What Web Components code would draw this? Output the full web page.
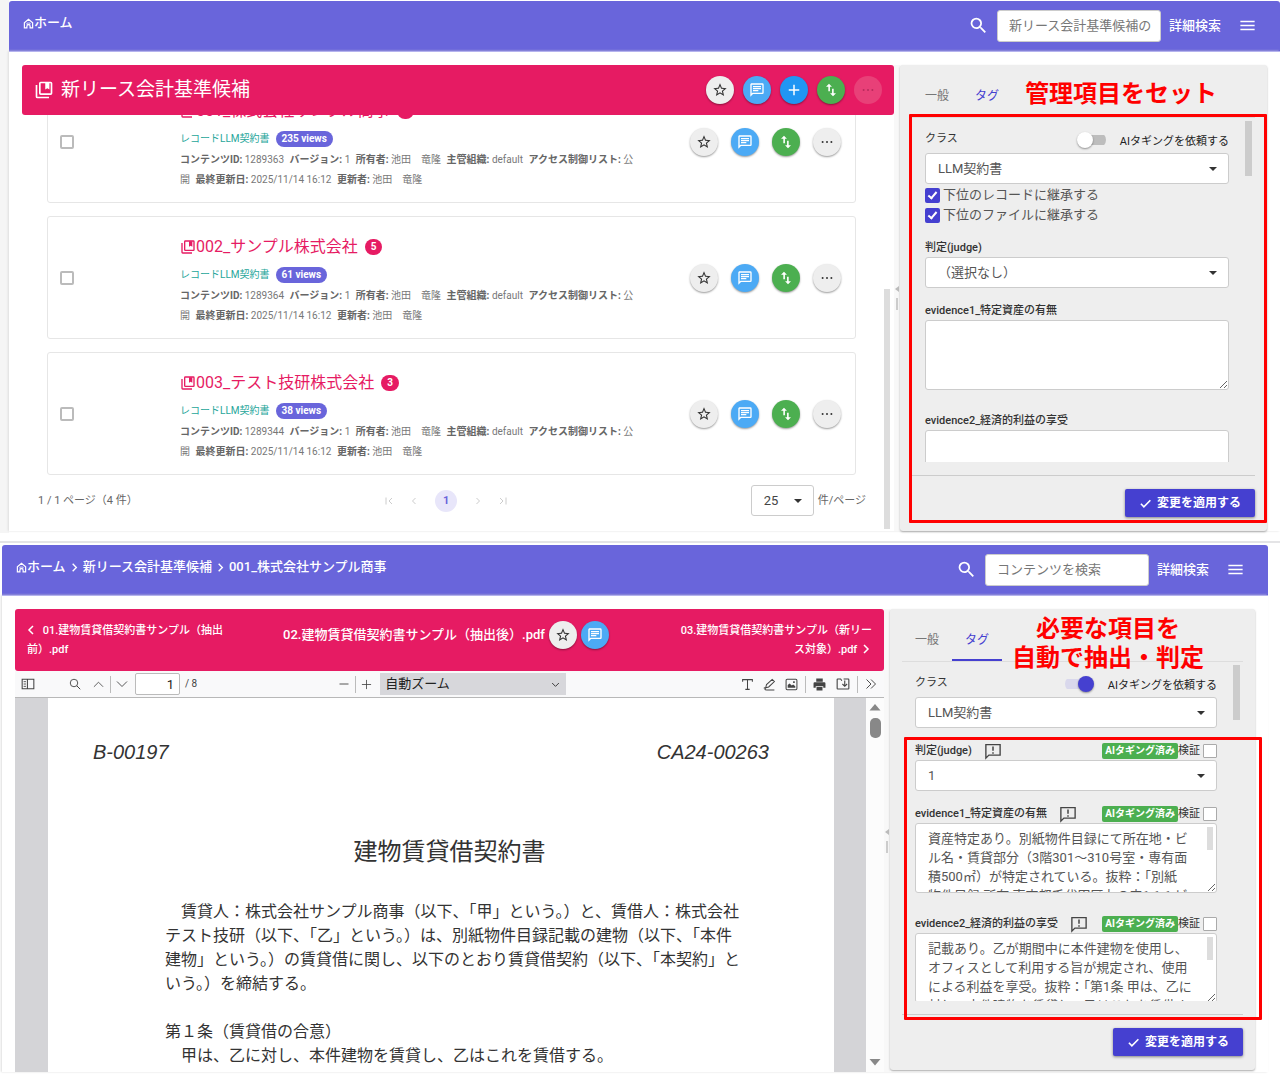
<!DOCTYPE html>
<html lang="ja">
<head>
<meta charset="utf-8">
<title>新リース会計基準候補</title>
<style>
body { margin: 0; background: #fff; color: #555; font: 13px/20px Roboto, "Noto Sans CJK JP", sans-serif; overflow-x: hidden; }
.stage { --side: 367px; background: linear-gradient(#f5f5f5, #f5f5f5) 0 0 / 9px 533px no-repeat #fff; padding: 1px 0 10px 9px; }
.stage + .stage { --side: 365px; background: #fff; border-top: 2px solid #e4e4e6; padding: 2px 12px 13px 2px; }
</style>
</head>
<body>
<div class="stage">
  <app-window placeholder="新リース会計基準候補の">
    <crumb-trail slot="crumbs" path="ホーム"></crumb-trail>
    <record-list></record-list>
    <tag-panel slot="side" style="height:466px">
      <class-row></class-row>
      <inherit-options></inherit-options>
      <tag-field label="判定(judge)" kind="select" value="（選択なし）"></tag-field>
      <tag-field label="evidence1_特定資産の有無" kind="area"></tag-field>
      <tag-field label="evidence2_経済的利益の享受" kind="area"></tag-field>
      <callout-note slot="notes" style="--box:49px 0 8px 9px; --top:13px; --left:125px; --lh:32px">管理項目をセット</callout-note>
    </tag-panel>
  </app-window>
</div>
<div class="stage">
  <app-window placeholder="コンテンツを検索">
    <crumb-trail slot="crumbs" path="ホーム|新リース会計基準候補|001_株式会社サンプル商事"></crumb-trail>
    <pdf-viewer></pdf-viewer>
    <tag-panel slot="side" style="height:461px">
      <class-row on></class-row>
      <tag-field ai label="判定(judge)" kind="select" value="1"></tag-field>
      <tag-field ai label="evidence1_特定資産の有無" kind="area" value="資産特定あり。別紙物件目録にて所在地・ビ
ル名・賃貸部分（3階301～310号室・専有面
積500㎡）が特定されている。抜粋：「別紙
物件目録 所在 東京都千代田区丸の内1-1-1 ビ"></tag-field>
      <tag-field ai label="evidence2_経済的利益の享受" kind="area" value="記載あり。乙が期間中に本件建物を使用し、
オフィスとして利用する旨が規定され、使用
による利益を享受。抜粋：「第1条 甲は、乙に
対し、本件建物を賃貸し、乙はこれを賃借す"></tag-field>
      <callout-note slot="notes" style="--box:128px -7px 50px 14px; --top:6px; --left:122px; --lh:29px">必要な項目を<br>自動で抽出・判定</callout-note>
    </tag-panel>
  </app-window>
</div>

<script>
const fill = (d) => `<path fill="currentColor" d="${d}"/>`;
const line = (d, w = 1.5) => `<path fill="none" stroke="currentColor" stroke-width="${w}" d="${d}"/>`;
const ICONS = {
  home: line('M3 21.500V10.500L12 3l9 7.500V21.500H15.500v-3.500a3.500 3.500 0 0 0-7 0V21.500Z', 2.6) + line('M8.500 11h7v3h-7z', 1.5),
  search: fill('M15.5 14h-.79l-.28-.27A6.47 6.47 0 0 0 16 9.5 6.5 6.5 0 1 0 9.5 16c1.61 0 3.09-.59 4.23-1.57l.27.28v.79l5 4.99L20.49 19l-4.99-5zm-6 0C7.01 14 5 11.99 5 9.5S7.01 5 9.5 5 14 7.01 14 9.5 11.99 14 9.5 14z'),
  menu: fill('M3 18h18v-2H3v2zm0-5h18v-2H3v2zm0-7v2h18V6H3z'),
  books: fill('M4 6H2v14a2 2 0 0 0 2 2h14v-2H4V6z') + line('M8 3h12a1 1 0 0 1 1 1v12a1 1 0 0 1-1 1H8a1 1 0 0 1-1-1V4a1 1 0 0 1 1-1z', 2) + fill('M13.5 3.5h5v8L16 10l-2.500 1.500z'),
  star: fill('M12,15.39L8.24,17.66L9.23,13.38L5.91,10.5L10.29,10.13L12,6.09L13.71,10.13L18.09,10.5L14.77,13.38L15.76,17.66M22,9.24L14.81,8.63L12,2L9.19,8.63L2,9.24L7.45,13.97L5.82,21L12,17.27L18.18,21L16.54,13.97L22,9.24Z'),
  chat: fill('M20,2A2,2 0 0,1 22,4V16A2,2 0 0,1 20,18H6L2,22V4C2,2.89 2.9,2 4,2H20M4,4V17.17L5.17,16H20V4H4M6,6H18V8H6V6M6,9H18V11H6V9M6,12H14V14H6V12Z'),
  plus: fill('M19,13H13V19H11V13H5V11H11V5H13V11H19V13Z'),
  swap: fill('M16 17V10h-2.400v7h-3L15 21.500l4.500-4.500H16zM9 2.500L4.500 7H8v7h2.400V7h3L9 2.500z'),
  dots: '<g fill="currentColor"><circle cx="4.5" cy="12" r="1.7"/><circle cx="12" cy="12" r="1.7"/><circle cx="19.5" cy="12" r="1.7"/></g>',
  left: line('M16 4l-8 8 8 8', 3), right: line('M8 4l8 8-8 8', 3),
  first: line('M18 6l-6 6 6 6M6 5v14', 2), last: line('M6 6l6 6-6 6M18 5v14', 2),
  prev: line('M15 6l-6 6 6 6', 2), next: line('M9 6l6 6-6 6', 2),
  caret: fill('M4 8h16l-8 8z'), check: line('M3.5 12.5l5.5 5.5L21 6', 3),
  alert: line('M2.5 3.5h19v14H6.500l-4 4z', 1.8) + line('M12 6v5.500M12 13.500v2', 2),
  sidebar: line('M2 4h20v16H2zM11 4v16', 1.8) + line('M4.5 8h4M4.5 12h4M4.5 16h4', 1.5),
  find: '<circle cx="10" cy="10" r="7.5" fill="none" stroke="currentColor" stroke-width="1.8"/>' + line('M15.5 15.5L22.5 22.5', 2),
  up: line('M2 17l10-10 10 10', 1.8), down: line('M2 7l10 10L22 7', 1.8), chev: line('M3 8l9 9 9-9', 2.5),
  minus: line('M3 12h18', 1.8), add: line('M12 2v20M2 12h20', 1.8),
  text: line('M3 7V3h18v4M12 3v18M8 21h8', 1.9),
  pen: line('M5 18l1.500-6L17 2.500l4 4L10.500 16.500zM1.500 19c2-2 4 0 2.500 1.500-1 1.500 1 1.500 3 1.500h14', 1.9),
  image: line('M4 2.500h16a2 2 0 0 1 2 2v15a2 2 0 0 1-2 2H4a2 2 0 0 1-2-2v-15a2 2 0 0 1 2-2z', 1.9) + fill('M5 18v-5l3.500-3 4 4 2.500-2 4 3v3zM15 6h3v3h-3z'),
  print: fill('M6 1h12v6H6zM3 8h18a2 2 0 0 1 2 2v8h-4v-3H5v3H1v-8a2 2 0 0 1 2-2zM6.500 16.500h11V23h-11z'),
  save: line('M13 3.500h8a1 1 0 0 1 1 1v15a1 1 0 0 1-1 1H3a1 1 0 0 1-1-1v-15a1 1 0 0 1 1-1h5l2 3M15 6v9M11 12l4 4 4-4', 1.9),
  more: line('M3 3l9 9-9 9M12 3l9 9-9 9', 1.9),
  tri: fill('M1 19h22L12 6z'), trid: fill('M1 6h22L12 19z')
};
const icon = (name, size) => `<svg width="${size}" height="${size}" viewBox="0 0 24 24" aria-hidden="true">${ICONS[name]}</svg>`;

const BASE = `
*,*::before,*::after{box-sizing:border-box}
:host{display:block} svg{display:block;flex:none}
button,input,select,textarea{font:inherit;color:inherit;margin:0}
button{padding:0;border:0;background:none} a{color:inherit;text-decoration:none}
input[type=checkbox]{appearance:none;flex:none;width:14px;height:14px;border:2px solid #bbb;border-radius:2px;background:#fff}
.drop{position:relative;display:block}
.drop select{appearance:none;display:block;width:100%;height:31px;padding:0 12px;border:1px solid #ccc;border-radius:3px;background:#fff}
.drop svg{position:absolute;right:10px;top:10px;color:#333;pointer-events:none}`;

class Part extends HTMLElement {
  connectedCallback() {
    if (this.shadowRoot) return;
    this.attachShadow({ mode: 'open' }).innerHTML = `<style>${BASE}${this.styles()}</style>${this.render()}`;
  }
  styles() { return ''; }
  render() { return '<slot></slot>'; }
}

customElements.define('app-window', class extends Part {
  styles() { return `
    header{display:flex;align-items:center;height:50px;padding:0 23px 0 14px;background:#6965db;border-bottom:1px solid #5b56d6;border-radius:3px 3px 0 0;box-shadow:0 1px 0 #b5b3ee;color:#fff}
    ::slotted([slot=crumbs]){align-self:flex-start;margin-top:12px}
    form{display:flex;align-items:center;margin-left:auto}
    input{width:164px;height:32px;margin-left:8px;padding:0 7px 0 11px;border:1px solid #ccc;border-radius:3px;background:#fff;color:#555}
    input::placeholder{color:#777;opacity:1}
    form a{margin:0 17px 0 8px;font-weight:500}
    .body{display:grid;grid-template-columns:minmax(0,1fr) 6px minmax(0,var(--side));align-items:start;padding:14px 13px 0;box-shadow:-1px 0 2px #ddd}
    .grip{align-self:stretch;display:flex;flex-direction:column;align-items:center;justify-content:center;gap:6px;background:#f8f8f8;color:#bbb}
    .grip i{width:2px;height:12px;background:#ccc}`; }
  render() { return `
    <header><slot name="crumbs"></slot>
      <form><button type="button" aria-label="検索">${icon('search', 21)}</button>
        <input type="text" aria-label="検索語" placeholder="${this.getAttribute('placeholder')}">
        <a href="#">詳細検索</a><button type="button" aria-label="メニュー">${icon('menu', 19)}</button></form>
    </header>
    <div class="body"><slot></slot><div class="grip"><svg width="4" height="6" viewBox="0 0 4 6"><path d="M4 0v6L0 3z" fill="currentColor"/></svg><i></i></div><slot name="side"></slot></div>`; }
});

customElements.define('crumb-trail', class extends Part {
  styles() { return `nav{display:flex;align-items:center;white-space:nowrap;font-weight:500} a{display:flex;align-items:center} nav>svg{margin:0 3px}`; }
  render() {
    const parts = this.getAttribute('path').split('|');
    return `<nav>${parts.map((p, i) => `${i ? icon('right', 11) : ''}<a href="#">${i ? '' : icon('home', 11)}${p}</a>`).join('')}</nav>`;
  }
});

customElements.define('round-action', class extends Part {
  styles() { return `
    button{display:flex;align-items:center;justify-content:center;width:28px;height:28px;border-radius:50%;background:#eee;color:#333;box-shadow:0 1px 2px rgba(0,0,0,.4)}
    :host([kind=chat]) button{background:#4caaf5;color:#fff} :host([kind=plus]) button{background:#2196f3;color:#fff}
    :host([kind=swap]) button{background:#4caf50;color:#fff} :host([faded]) button{background:#e84078;color:#b82a5c;box-shadow:none}`; }
  render() { const k = this.getAttribute('kind'); return `<button type="button" aria-label="${k}">${icon(k, k === 'dots' ? 14 : k === 'plus' ? 18 : 16)}</button>`; }
});

customElements.define('record-card', class extends Part {
  styles() { return `
    article{display:flex;align-items:center;min-height:123px;padding:0 14px 0 12px;border:1px solid #e6e6e6;border-radius:3px;background:#fff}
    .info{flex:1;max-width:460px;margin-left:106px;padding:18px 0 12px}
    h3{display:flex;align-items:center;margin:0;font:400 16px/24px Roboto,"Noto Sans CJK JP",sans-serif;color:#e61b63}
    h3 b{margin-left:7px;padding:0 6px;border-radius:9px;background:#e61b63;color:#fff;font:700 10px/16px Roboto,sans-serif}
    .kind{display:flex;align-items:center;gap:6px;margin-top:8px;font-size:10px;line-height:16px;color:#26a69a}
    .kind b{padding:0 6px;border-radius:8px;background:#6965db;color:#fff}
    p{margin:3px 0 0;font-size:10px;line-height:20px;color:#777} p b{color:#666} p span{margin-right:3px}
    .acts{display:flex;gap:13px;margin-left:auto}`; }
  render() {
    const g = (n) => this.getAttribute(n);
    const rows = [['コンテンツID', g('cid')], ['バージョン', '1'], ['所有者', '池田　竜隆'], ['主管組織', 'default'], ['アクセス制御リスト', '公<wbr>開'], ['最終更新日', '2025/11/14 16:12'], ['更新者', '池田　竜隆']];
    return `<article><input type="checkbox" aria-label="${g('name')}">
      <div class="info"><h3>${icon('books', 16)}<a href="#">${g('name')}</a><b>${g('count')}</b></h3>
      <div class="kind"><span>レコードLLM契約書</span><b>${g('views')} views</b></div>
      <p>${rows.map(([k, v]) => `<b>${k}:</b> <span>${v.replace('<wbr>', '</span><wbr><span>')}</span>`.replace('公</span>', '公</span>')).join(' ')}</p></div>
      <div class="acts">${['star', 'chat', 'swap', 'dots'].map((k) => `<round-action kind="${k}"></round-action>`).join('')}</div></article>`;
  }
});

customElements.define('page-nav', class extends Part {
  styles() { return `
    :host{display:flex;align-items:center;padding:10px 18px 15px 16px;font-size:11px;color:#666}
    nav{display:flex;align-items:center;gap:13px;color:#ccc;margin:0 auto;padding-left:4px} nav b{width:22px;margin:0 2px;border-radius:50%;background:#e8e6fa;color:#6965db;line-height:22px;text-align:center}
    .drop{width:63px;margin-right:4px;font-size:13px;color:#444}`; }
  render() { return `<span>1 / 1 ページ（4 件）</span>
    <nav>${icon('first', 12)}${icon('prev', 12)}<b>1</b>${icon('next', 12)}${icon('last', 12)}</nav>
    <label class="drop"><select aria-label="表示件数"><option>25</option></select>${icon('caret', 12)}</label><span>件/ページ</span>`; }
});

customElements.define('record-list', class extends Part {
  styles() { return `
    :host{display:flex;flex-direction:column;height:466px;overflow:hidden}
    .bar{display:flex;align-items:center;gap:9px;flex:none;height:50px;padding:0 12px;border-radius:3px;background:#e61b63;color:#fff}
    h2{flex:1;display:flex;align-items:center;gap:7px;margin:0;font:400 19px/28px Roboto,"Noto Sans CJK JP",sans-serif}
    .scroll{flex:1;min-height:0;display:flex;overflow:hidden;padding-right:4px}
    .items{flex:1;min-width:0;display:flex;flex-direction:column;justify-content:flex-end;gap:13px}
    .items record-card{flex:none;margin:0 28px 0 25px} page-nav{flex:none;margin-top:-13px}
    .rail{width:6px;display:flex;align-items:flex-end;padding-bottom:2px} .rail i{width:6px;height:240px;background:#ddd}`; }
  render() { return `
    <div class="bar"><h2>${icon('books', 20)}新リース会計基準候補</h2>
      <round-action kind="star"></round-action><round-action kind="chat"></round-action><round-action kind="plus"></round-action><round-action kind="swap"></round-action><round-action kind="dots" faded></round-action></div>
    <div class="scroll"><div class="items">
      <record-card name="001_株式会社サンプル商事" count="1" cid="1289363" views="235"></record-card>
      <record-card name="002_サンプル株式会社" count="5" cid="1289364" views="61"></record-card>
      <record-card name="003_テスト技研株式会社" count="3" cid="1289344" views="38"></record-card>
      <page-nav></page-nav></div><div class="rail"><i></i></div></div>`; }
});

customElements.define('tag-panel', class extends Part {
  styles() { return `
    :host{position:relative;display:flex;flex-direction:column;padding:0 12px;border-radius:3px;background:#eee;box-shadow:0 1px 2px #aaa}
    nav{display:flex;flex:none;height:53px;border-bottom:1px solid #ddd;font-size:12px;color:#777}
    nav button{width:50px;padding-top:11px;border-bottom:2px solid transparent} nav .on{color:#4540d0;border-color:#4540d0}
    .scroll{flex:1;min-height:0;display:flex;gap:16px;overflow:hidden;padding:0 3px 0 13px}
    .fields{flex:1;min-width:0;display:flex;flex-direction:column} .scroll>i{width:7px;height:55px;margin-top:3px;background:#ccc}
    footer{display:flex;justify-content:flex-end;flex:none;margin-top:13px;padding:13px 0 14px;border-top:1px solid #ccc}
    footer button{display:flex;align-items:center;gap:5px;height:28px;padding:0 14px;border-radius:2px;background:#4540d0;color:#fff;font-size:12px;font-weight:700;box-shadow:0 1px 3px rgba(0,0,0,.45)}`; }
  render() { return `<nav><button type="button">一般</button><button type="button" class="on">タグ</button></nav>
    <div class="scroll"><div class="fields"><slot></slot></div><i></i></div>
    <footer><button type="button">${icon('check', 13)}変更を適用する</button></footer><slot name="notes"></slot>`; }
});

customElements.define('class-row', class extends Part {
  styles() { return `
    .head{display:flex;justify-content:space-between;align-items:flex-end;height:35px;font-size:11px;line-height:16px;color:#333}
    .head>label{padding-bottom:6px} .head .sw{display:flex;align-items:center;gap:14px;padding-bottom:2px;color:#222}
    .sw input{position:relative;width:29px;height:16px;margin-bottom:3px;border:0;border-radius:8px;background:linear-gradient(#bdbdbd,#bdbdbd) right center/22px 10px no-repeat}
    .sw input::after{content:"";position:absolute;left:0;top:0;width:16px;height:16px;border-radius:50%;background:#fff;box-shadow:0 1px 2px rgba(0,0,0,.4)}
    .sw input:checked{background:linear-gradient(#d9d8ec,#d9d8ec) left center/22px 10px no-repeat} .sw input:checked::after{left:13px;background:#4540d0}`; }
  render() { return `<div class="head"><label for="c">クラス</label><label class="sw"><input type="checkbox" ${this.hasAttribute('on') ? 'checked' : ''}>AIタギングを依頼する</label></div>
    <div class="drop"><select id="c"><option>LLM契約書</option></select>${icon('caret', 12)}</div>`; }
});

customElements.define('inherit-options', class extends Part {
  styles() { return `
    :host{padding-top:1px} label{display:flex;align-items:center;gap:3px;height:20px}
    input[type=checkbox]{display:flex;justify-content:center;width:15px;height:15px;border:0;background:#4540d0}
    input::after{content:"";width:5px;height:9px;margin-top:2px;border:solid #fff;border-width:0 2px 2px 0;transform:rotate(40deg)}`; }
  render() { return `<label><input type="checkbox" checked>下位のレコードに継承する</label><label><input type="checkbox" checked>下位のファイルに継承する</label>`; }
});

customElements.define('tag-field', class extends Part {
  styles() { return `
    :host{flex:none;margin-top:15px} :host([kind=area]){margin-bottom:8px}
    .head{display:flex;align-items:center;height:16px;margin-bottom:1px;font-size:11px;line-height:16px;color:#333}
    .head>label:first-child{font-weight:500} .head>svg{margin-left:12px;color:#444}
    .head b{margin-left:auto;padding:0 3px;border-radius:2px;background:#4caf50;color:#fff;font-size:10px}
    .head .ver{display:flex;align-items:center;gap:3px} .ver input[type=checkbox]{border-width:1px;border-color:#aaa;border-radius:1px}
    .area{display:flex;position:relative}
    textarea{flex:1;min-width:0;height:70px;padding:5px 12px;border:1px solid #ccc;border-radius:3px;background:#fff;line-height:19px;white-space:pre;overflow:hidden;resize:both}
    .area i{position:absolute;right:4px;top:4px;width:6px;height:23px;background:#ddd}`; }
  render() {
    const g = (n) => this.getAttribute(n) || '';
    const ai = this.hasAttribute('ai');
    const control = g('kind') === 'select'
      ? `<div class="drop"><select id="f"><option>${g('value')}</option></select>${icon('caret', 12)}</div>`
      : `<div class="area"><textarea id="f">${g('value')}</textarea>${ai ? '<i></i>' : ''}</div>`;
    return `<div class="head"><label for="f">${g('label')}</label>${ai ? `${icon('alert', 18)}<b>AIタギング済み</b><label class="ver">検証<input type="checkbox"></label>` : ''}</div>${control}`;
  }
});

customElements.define('callout-note', class extends Part {
  styles() { return `
    .box{position:absolute;inset:var(--box);border:3px solid #f00;border-radius:1px;pointer-events:none}
    .text{position:absolute;top:var(--top);left:var(--left);color:#f00;font-size:24px;font-weight:700;line-height:var(--lh);text-align:center;white-space:nowrap}`; }
  render() { return '<div class="box"></div><div class="text"><slot></slot></div>'; }
});

customElements.define('pdf-viewer', class extends Part {
  styles() { return `
    :host{display:flex;flex-direction:column;height:463px}
    .bar{display:flex;align-items:center;justify-content:space-between;flex:none;height:62px;padding:0 12px;border-radius:3px;background:#e61b63;color:#fff;font-weight:500}
    .bar>a{flex:none;width:203px;font-size:11px;line-height:19px} .bar>a:last-child{width:210px;text-align:right}
    .bar>a svg{display:inline-block;vertical-align:-2px} .bar>a:first-child svg{margin:0 3px 0 -2px}
    .now{display:flex;align-items:center;gap:4px;padding-bottom:10px;white-space:nowrap}
    .tools{display:flex;align-items:center;flex:none;height:27px;padding:0 7px 0 6px;border-bottom:1px solid #b8b8b8;background:#f9f9fa;color:#444}
    .tools s{width:1px;height:17px;background:#bbb} .g{display:flex;align-items:center}
    .tools input{width:45px;height:22px;margin:0 5px 0 7px;padding:0 5px;border:1px solid #bbb;border-radius:2px;background:#fff;text-align:right;color:#222}
    .tools small{font-size:10px} .tools .drop{width:186px;margin-left:8px;color:#222}
    .tools .drop select{height:22px;padding:0 5px;border:0;border-radius:0;background:#d7d7db} .tools .drop svg{right:6px;top:7px;width:9px;height:9px}
    .view{flex:1;min-height:0;display:flex;background:#d4d4d7;padding-left:33px}
    .page{flex:1;min-width:0;margin-right:32px;padding:38px 0 0;background:#fff;color:#333;font-family:"Liberation Serif","Noto Sans CJK JP",serif;overflow:hidden}
    .hand{display:flex;justify-content:space-between;height:32px;padding:0 65px 0 45px;font:italic 20px/32px "Liberation Sans",sans-serif}
    .doc{padding:0 100px 0 117px;font-size:16px;line-height:24px;white-space:nowrap} h1{margin:66px 0 30px;font-size:24px;line-height:36px;font-weight:400;text-align:center}
    p{margin:0} p+p{margin-top:24px}
    .rail{width:18px;display:flex;flex-direction:column;align-items:center;padding:3px 0 4px;background:#fcfcfc;color:#888}
    .rail i{width:11px;height:20px;margin:5px 0 auto;border-radius:5px;background:#888}`; }
  render() {
    const b = (n, label, size, m) => `<button type="button" aria-label="${label}" style="margin-left:${m}px">${icon(n, size)}</button>`;
    return `<div class="bar"><a href="#">${icon('left', 12)} 01.建物賃貸借契約書サンプル（抽出<br>前）.pdf</a>
      <div class="now"><span>02.建物賃貸借契約書サンプル（抽出後）.pdf</span><round-action kind="star"></round-action><round-action kind="chat"></round-action></div>
      <a href="#">03.建物賃貸借契約書サンプル（新リー<br>ス対象）.pdf ${icon('right', 12)}</a></div>
    <div class="tools"><div class="g">${b('sidebar', 'サイドバー', 14, 0)}${b('find', '検索', 12, 34)}${b('up', '前へ', 11, 12)}<s style="margin:0 5px 0 6px"></s>${b('down', '次へ', 12, 0)}<input type="text" aria-label="ページ" value="1"><small>/ 8</small></div>
      <span style="flex:142"></span>
      <div class="g">${b('minus', '縮小', 12, 0)}<s style="margin:0 5px"></s>${b('add', '拡大', 11, 0)}<label class="drop"><select aria-label="ズーム"><option>自動ズーム</option></select>${icon('chev', 9)}</label></div>
      <span style="flex:176"></span>
      <div class="g">${b('text', 'テキスト', 13, 0)}${b('pen', '描画', 13, 9)}${b('image', '画像', 13, 9)}<s style="margin-left:7px"></s>${b('print', '印刷', 13, 7)}${b('save', '保存', 14, 10)}<s style="margin-left:7px"></s>${b('more', 'ツール', 12, 7)}</div></div>
    <div class="view"><div class="page"><div class="hand"><span>B-00197</span><span>CA24-00263</span></div>
      <div class="doc"><h1>建物賃貸借契約書</h1>
      <p>　賃貸人：株式会社サンプル商事（以下、「甲」という。）と、賃借人：株式会社<br>テスト技研（以下、「乙」という。）は、別紙物件目録記載の建物（以下、「本件<br>建物」という。）の賃貸借に関し、以下のとおり賃貸借契約（以下、「本契約」と<br>いう。）を締結する。</p>
      <p>第１条（賃貸借の合意）<br>　甲は、乙に対し、本件建物を賃貸し、乙はこれを賃借する。</p></div></div>
      <div class="rail">${icon('tri', 12)}<i></i>${icon('trid', 12)}</div></div>`;
  }
});
</script>
</body>
</html>
